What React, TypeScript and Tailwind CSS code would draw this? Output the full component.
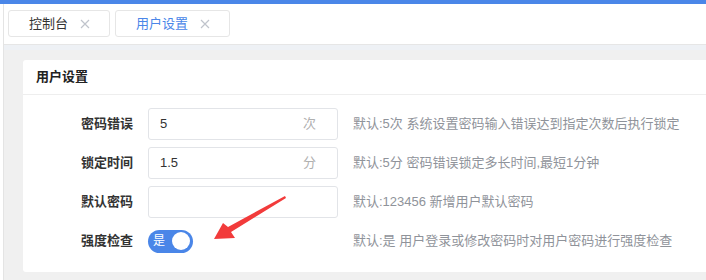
import React from 'react';

const font = { fontFamily: '"Liberation Sans", "Noto Sans CJK SC", sans-serif' };

const rows = [
  { label: '密码错误', value: '5', unit: '次', tip: '默认:5次 系统设置密码输入错误达到指定次数后执行锁定' },
  { label: '锁定时间', value: '1.5', unit: '分', tip: '默认:5分 密码错误锁定多长时间,最短1分钟' },
  { label: '默认密码', value: '', unit: '', tip: '默认:123456 新增用户默认密码' },
];

const Tab = ({ title, active }: { title: string; active?: boolean }) => (
  <div className="flex items-center h-[27px] pl-[20px] pr-[19px] border border-[#e6e6e6] rounded-[3px] bg-white">
    <span className={`text-[13px] leading-none ${active ? 'text-[#4a86e8]' : 'text-[#333]'}`}>{title}</span>
    <svg className="ml-[12px]" width="10" height="10" viewBox="0 0 10 10">
      <path d="M1 1 L9 9 M9 1 L1 9" stroke="#c0c4cc" strokeWidth="1.2" />
    </svg>
  </div>
);

export default function App() {
  return (
    <div className="relative w-[706px] h-[280px] overflow-hidden bg-white flex flex-col" style={font}>
      <div className="h-[4px] bg-[#4a86e8] shrink-0" />
      <div className="flex flex-1 min-h-0">
        <div className="w-[4px] shrink-0 bg-white border-r border-[#e4e4e4]" />
        <div className="flex-1 flex flex-col min-w-0">
          {/* tabs */}
          <div className="h-[41px] shrink-0 bg-white border-b border-[#e6e6e6] flex items-start pt-[6px] pl-[4px] gap-[5px]">
            <Tab title="控制台" />
            <Tab title="用户设置" active />
          </div>

          {/* content */}
          <div className="flex-1 pl-[19px] pt-[15px] bg-[linear-gradient(#eef1f5_0,#eef1f5_5px,#f0f0f0_5px)]">
            <div className="bg-white rounded-l-[3px] h-[212px] flex flex-col">
              <div className="h-[35px] flex items-center pl-[13px] border-b border-[#eeeeee] shrink-0">
                <span className="text-[13px] font-semibold text-[#222]">用户设置</span>
              </div>
              <div className="flex flex-col gap-[7px] pt-[13px]">
                {rows.map((r) => (
                  <div key={r.label} className="flex items-center h-[32px]">
                    <div className="w-[110px] text-right text-[13px] font-semibold text-[#333]">{r.label}</div>
                    <div className="ml-[15px] w-[190px] h-[32px] border border-[#e2e4e8] rounded-[3px] flex items-center pl-[11px] pr-[21px]">
                      <span className="flex-1 text-[13px] text-[#333]">{r.value}</span>
                      <span className="text-[13px] text-[#b0b0b0]">{r.unit}</span>
                    </div>
                    <div className="ml-[15px] text-[13px] text-[#8f939a] whitespace-nowrap">{r.tip}</div>
                  </div>
                ))}
                <div className="flex items-center h-[32px]">
                  <div className="w-[110px] text-right text-[13px] font-semibold text-[#333]">强度检查</div>
                  <div className="ml-[15px] w-[190px] flex items-center">
                    <div className="w-[45px] h-[23px] rounded-full bg-[#4a86e8] flex items-center justify-between pl-[5px] pr-[3px]">
                      <span className="text-[12px] text-white leading-none">是</span>
                      <span className="w-[18px] h-[18px] rounded-full bg-white" />
                    </div>
                  </div>
                  <div className="ml-[15px] text-[13px] text-[#8f939a] whitespace-nowrap">默认:是 用户登录或修改密码时对用户密码进行强度检查</div>
                </div>
              </div>
            </div>
          </div>
        </div>
      </div>

      {/* red annotation arrow */}
      <svg className="absolute left-0 top-0 pointer-events-none" width="706" height="280" viewBox="0 0 706 280">
        <polygon
          points="214,239 223,223 228,227 285,196 286,198 231,232 235,238"
          fill="#f23b3b"
        />
      </svg>
    </div>
  );
}
